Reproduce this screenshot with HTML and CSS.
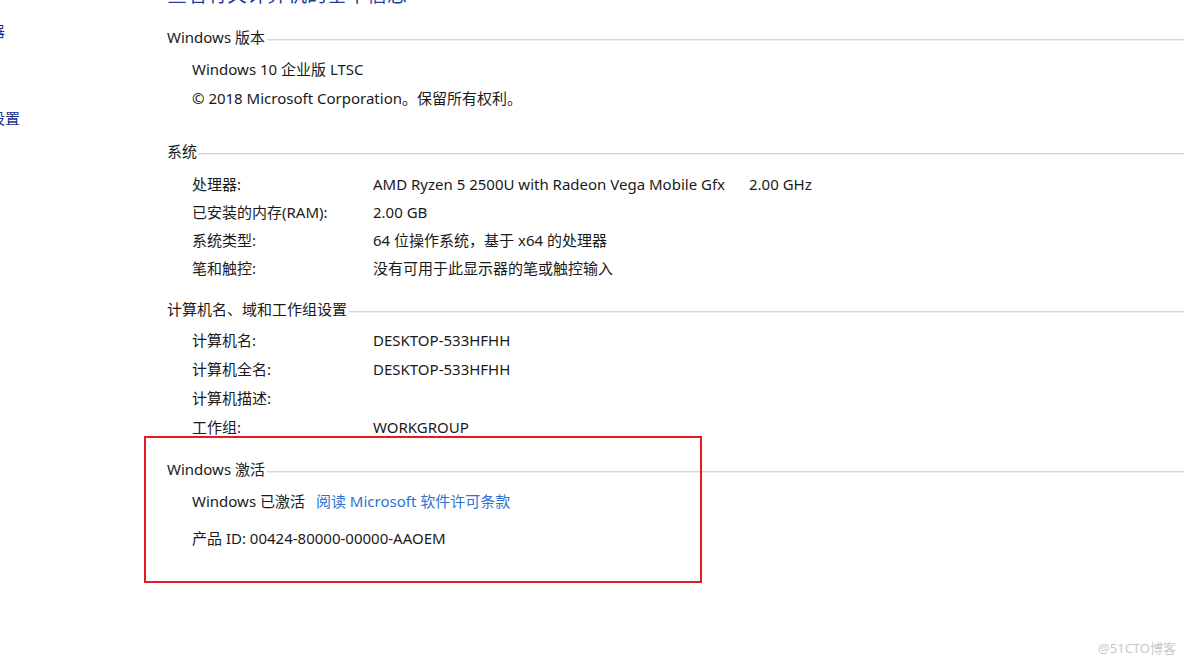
FILE: index.html
```html
<!DOCTYPE html>
<html lang="zh-CN">
<head>
    <meta charset="UTF-8">
    <meta name="viewport" content="width=device-width, initial-scale=1.0">
    <title>系统</title>
    <link rel="stylesheet" href="styles.css">
</head>
<body>
    <div class="page">
        <div class="sidebar">
            <a class="side-link">设备管理器</a>
            <a class="side-link">远程设置</a>
            <a class="side-link">系统保护</a>
            <a class="side-link">高级系统设置</a>
        </div>

        <div class="main">
            <h1 class="title">查看有关计算机的基本信息</h1>

            <div class="section section-version">
                <div class="heading"><span>Windows 版本</span><div class="rule"></div></div>
                <div class="rows">
                    <div class="row"><span class="label-wide">Windows 10 企业版 LTSC</span></div>
                    <div class="row"><span class="label-wide">© 2018 Microsoft Corporation。保留所有权利。</span></div>
                </div>
            </div>

            <div class="section section-system">
                <div class="heading"><span>系统</span><div class="rule"></div></div>
                <div class="rows tight">
                    <div class="row"><span class="label">处理器:</span><span class="value"><span class="cpu">AMD Ryzen 5 2500U with Radeon Vega Mobile Gfx</span>2.00 GHz</span></div>
                    <div class="row"><span class="label">已安装的内存(RAM):</span><span class="value">2.00 GB</span></div>
                    <div class="row"><span class="label">系统类型:</span><span class="value">64 位操作系统，基于 x64 的处理器</span></div>
                    <div class="row"><span class="label">笔和触控:</span><span class="value">没有可用于此显示器的笔或触控输入</span></div>
                </div>
            </div>

            <div class="section section-computer">
                <div class="heading"><span>计算机名、域和工作组设置</span><div class="rule"></div></div>
                <div class="rows">
                    <div class="row"><span class="label">计算机名:</span><span class="value">DESKTOP-533HFHH</span></div>
                    <div class="row"><span class="label">计算机全名:</span><span class="value">DESKTOP-533HFHH</span></div>
                    <div class="row"><span class="label">计算机描述:</span><span class="value"></span></div>
                    <div class="row"><span class="label">工作组:</span><span class="value">WORKGROUP</span></div>
                </div>
            </div>

            <div class="section section-activation">
                <div class="heading"><span>Windows 激活</span><div class="rule"></div></div>
                <div class="rows">
                    <div class="row"><span class="label-wide">Windows 已激活<a class="link">阅读 Microsoft 软件许可条款</a></span></div>
                    <div class="row product"><span class="label-wide">产品 ID: 00424-80000-00000-AAOEM</span></div>
                </div>
            </div>
        </div>

        <div class="mark-box"></div>
        <div class="watermark">@51CTO博客</div>
    </div>
</body>
</html>
```

FILE: styles.css
```css
body {
    margin: 0;
    background: #fff;
    font-family: "Noto Sans", "Noto Sans CJK SC", sans-serif;
    font-size: 15px;
    color: #1a1a1a;
    overflow: hidden;
}
.page {
    position: relative;
    display: flex;
    width: 1184px;
    height: 666px;
    overflow: hidden;
}
.sidebar {
    width: 150px;
    flex: none;
    display: flex;
    flex-direction: column;
    padding-top: 17px;
}
.side-link {
    display: block;
    margin-left: -70px;
    height: 29px;
    line-height: 29px;
    color: #1e3287;
    white-space: nowrap;
}
.main {
    flex: 1;
    padding-left: 17px;
}
.title {
    margin: -18px 0 0;
    font-size: 20px;
    font-weight: normal;
    line-height: 26px;
    color: #1f3f9f;
}
.section-version {
    margin-top: 19px;
}
.heading {
    display: flex;
    align-items: flex-start;
    height: 20px;
    line-height: 20px;
    white-space: nowrap;
}
.rule {
    flex: 1;
    margin-top: 12px;
    margin-left: 2px;
    border-top: 1px solid #d6d6d6;
    border-bottom: 1px solid #ededed;
}
.rows {
    padding-left: 25px;
    margin-top: 8px;
}
.row {
    display: flex;
    height: 29px;
    line-height: 29px;
    white-space: nowrap;
}
.tight .row {
    height: 28px;
    line-height: 28px;
}
.label {
    width: 181px;
    flex: none;
}
.cpu {
    display: inline-block;
    width: 376px;
}
.link {
    margin-left: 11px;
    color: #2b72d2;
}
.product {
    margin-top: 8px;
}
.section-version .rows {
    margin-bottom: 28px;
}
.section-system .rows {
    margin-top: 9px;
    margin-bottom: 17px;
}
.section-computer .rows {
    margin-top: 7px;
    margin-bottom: 17px;
}
.mark-box {
    position: absolute;
    left: 144px;
    top: 436px;
    width: 554px;
    height: 143px;
    border: 2px solid #e41b23;
}
.watermark {
    position: absolute;
    right: 8px;
    top: 638px;
    font-size: 13px;
    line-height: 20px;
    color: #c9c9c9;
}
```
